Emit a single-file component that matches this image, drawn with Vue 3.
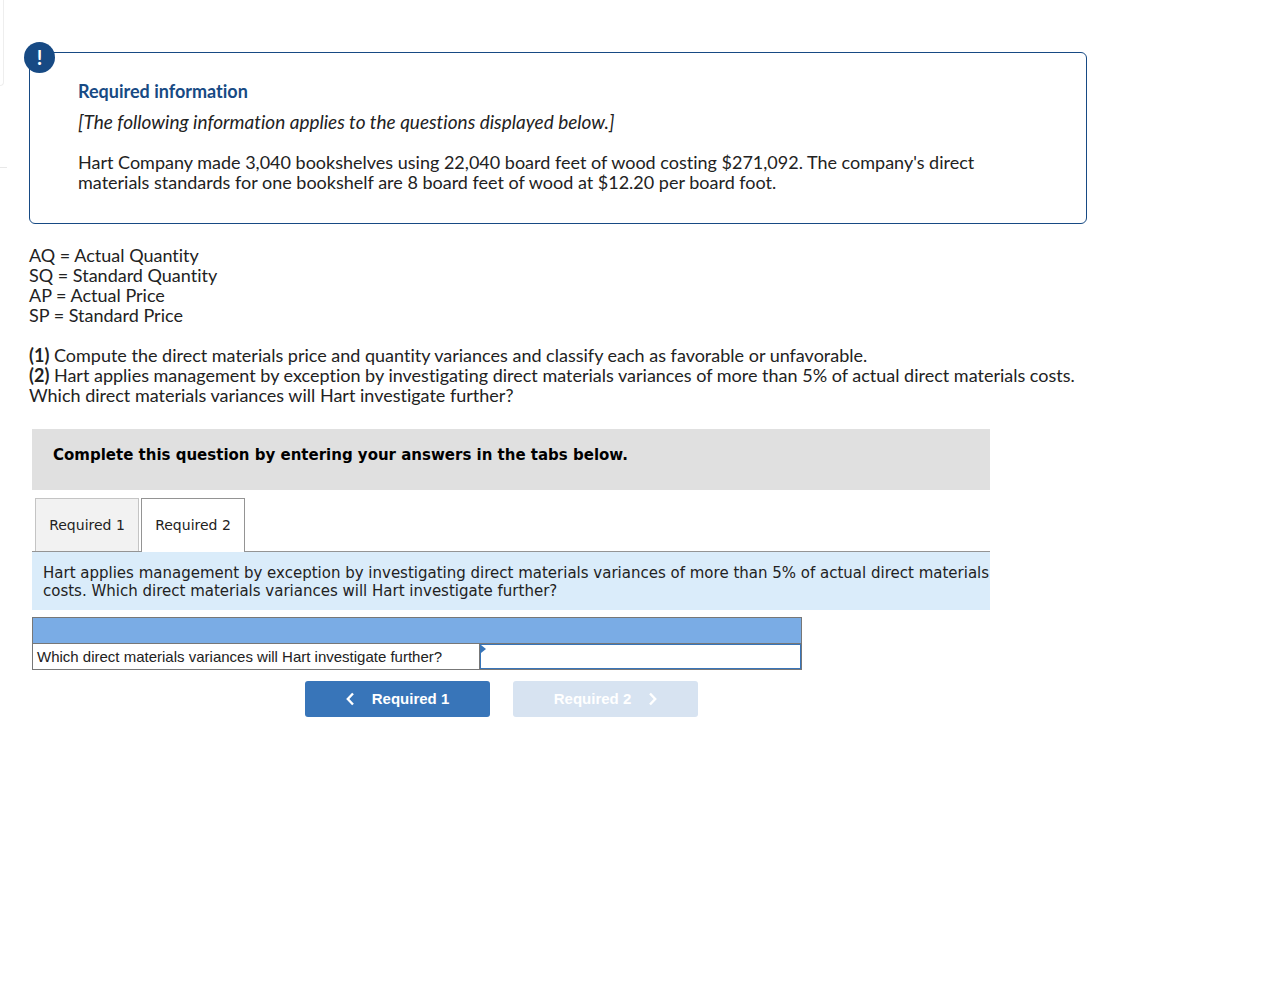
<script setup>
import { ref } from 'vue'

const answer = ref('')
const active = ref(2)
const terms = [
  'AQ = Actual Quantity',
  'SQ = Standard Quantity',
  'AP = Actual Price',
  'SP = Standard Price',
]
</script>

<template>
  <div class="page">
    <div class="rail" aria-hidden="true">
      <div class="rail-card"></div>
      <div class="rail-rule"></div>
    </div>

    <main class="content">
      <section class="info">
        <span class="badge">!</span>
        <h1>Required information</h1>
        <p class="note">[The following information applies to the questions displayed below.]</p>
        <p>
          Hart Company made 3,040 bookshelves using 22,040 board feet of wood costing $271,092. The company's direct<br />
          materials standards for one bookshelf are 8 board feet of wood at $12.20 per board foot.
        </p>
      </section>

      <ul class="terms">
        <li v-for="t in terms" :key="t">{{ t }}</li>
      </ul>

      <p class="question">
        <b>(1)</b> Compute the direct materials price and quantity variances and classify each as favorable or unfavorable.<br />
        <b>(2)</b> Hart applies management by exception by investigating direct materials variances of more than 5% of actual direct materials costs.
        Which direct materials variances will Hart investigate further?
      </p>

      <section class="answer">
        <h2>Complete this question by entering your answers in the tabs below.</h2>
        <div class="tabs" role="tablist">
          <button
            v-for="n in 2"
            :key="n"
            class="tab"
            :class="{ active: active === n }"
            role="tab"
            :aria-selected="active === n"
            @click="active = n"
          >Required {{ n }}</button>
        </div>
        <p class="prompt">
          Hart applies management by exception by investigating direct materials variances of more than 5% of actual direct materials
          costs. Which direct materials variances will Hart investigate further?
        </p>

        <table>
          <colgroup>
            <col class="col-label" />
            <col />
          </colgroup>
          <thead>
            <tr><th colspan="2"></th></tr>
          </thead>
          <tbody>
            <tr>
              <td class="label"><label for="investigate">Which direct materials variances will Hart investigate further?</label></td>
              <td class="entry"><input id="investigate" v-model="answer" type="text" /></td>
            </tr>
          </tbody>
        </table>

        <div class="nav">
          <button class="step">
            <svg width="8" height="14" viewBox="0 0 8 14"><path d="M7 1.500 1.800 7 7 12.500" /></svg>
            Required 1
          </button>
          <button class="step" disabled>
            Required 2
            <svg width="8" height="14" viewBox="0 0 8 14"><path d="M1 1.500 6.200 7 1 12.500" /></svg>
          </button>
        </div>
      </section>
    </main>
  </div>
</template>

<style>
body {
  background: #fff;
}
</style>

<style scoped>
.page {
  display: flex;
  font-family: Lato, "Liberation Sans", sans-serif;
  font-size: 18px;
  line-height: 20px;
  font-variant-ligatures: none;
  color: #222;
}
.rail {
  flex: none;
  width: 7px;
}
.rail-card {
  box-sizing: border-box;
  width: 4px;
  height: 86px;
  border: solid #eee;
  border-width: 0 1px 1px 0;
  border-bottom-right-radius: 4px;
}
.rail-rule {
  height: 1px;
  margin-top: 81px;
  background: #e8e8e8;
}
.content {
  flex: 1;
  max-width: 1058px;
  margin: 52px 24px 24px 22px;
}
p, h1, h2, ul {
  margin: 0;
  padding: 0;
}
.info {
  position: relative;
  padding: 28px 48px 31px;
  border: 1px solid #174a84;
  border-radius: 6px;
}
.badge {
  position: absolute;
  top: -11px;
  left: -6px;
  width: 31px;
  height: 31px;
  border-radius: 50%;
  background: #174a84;
  color: #fff;
  font-size: 20px;
  font-weight: 700;
  line-height: 31px;
  text-align: center;
}
h1 {
  font-size: 18px;
  line-height: 20px;
  font-weight: 700;
  color: #174a84;
}
.note {
  margin: 11px 0 20px;
  font-size: 19px;
  font-style: italic;
}
.terms {
  margin-top: 21px;
  list-style: none;
}
.question {
  margin-top: 20px;
}
.answer {
  max-width: 958px;
  margin: 24px 0 0 3px;
}
h2 {
  padding: 16px 21px 25px;
  background: #e0e0e0;
  color: #000;
  font: 700 15px/20px "DejaVu Sans", sans-serif;
}
.tabs {
  display: flex;
  gap: 2px;
  margin-top: 8px;
  padding-left: 3px;
  border-bottom: 1px solid #949494;
}
.tab {
  box-sizing: border-box;
  min-width: 104px;
  height: 53px;
  padding: 0 12px;
  border: 1px solid #c4c4c4;
  border-bottom: 0;
  background: #f2f2f2;
  color: #222;
  font: 14px/18px "DejaVu Sans", sans-serif;
}
.tab.active {
  height: 54px;
  margin-bottom: -1px;
  padding-bottom: 2px;
  border-color: #949494;
  background: #fff;
}
.prompt {
  padding: 12px 0 10px 11px;
  background: #daecfa;
  color: #222;
  font: 15px/18px "DejaVu Sans", sans-serif;
}
table {
  width: 770px;
  max-width: 100%;
  margin-top: 7px;
  border-collapse: collapse;
  table-layout: fixed;
  font: 15px/18px "Liberation Sans", Arial, sans-serif;
}
.col-label {
  width: 447px;
}
th, td {
  box-sizing: border-box;
  height: 26px;
  padding: 0;
  border: 1px solid #777;
}
th {
  background: #7aace5;
}
.label {
  padding-left: 4px;
}
.entry {
  position: relative;
}
.entry::before {
  content: "";
  position: absolute;
  top: 1px;
  left: 1px;
  border: solid transparent;
  border-width: 4px 0 4px 5px;
  border-left-color: #3875b9;
}
input {
  display: block;
  box-sizing: border-box;
  width: 100%;
  height: 25px;
  padding: 0 8px;
  border: 1px solid #3875b9;
  background: #fff;
  font: inherit;
  outline: 0;
}
.nav {
  display: flex;
  gap: 23px;
  margin: 11px 0 0 273px;
}
.step {
  display: flex;
  align-items: center;
  justify-content: center;
  gap: 18px;
  width: 185px;
  height: 36px;
  padding: 0;
  border: 0;
  border-radius: 3px;
  background: #3875b9;
  color: #fff;
  font: 700 15px/18px "Liberation Sans", Arial, sans-serif;
}
.step:disabled {
  background: #d7e3f1;
}
.step svg {
  fill: none;
  stroke: currentColor;
  stroke-width: 2.400;
}
</style>
